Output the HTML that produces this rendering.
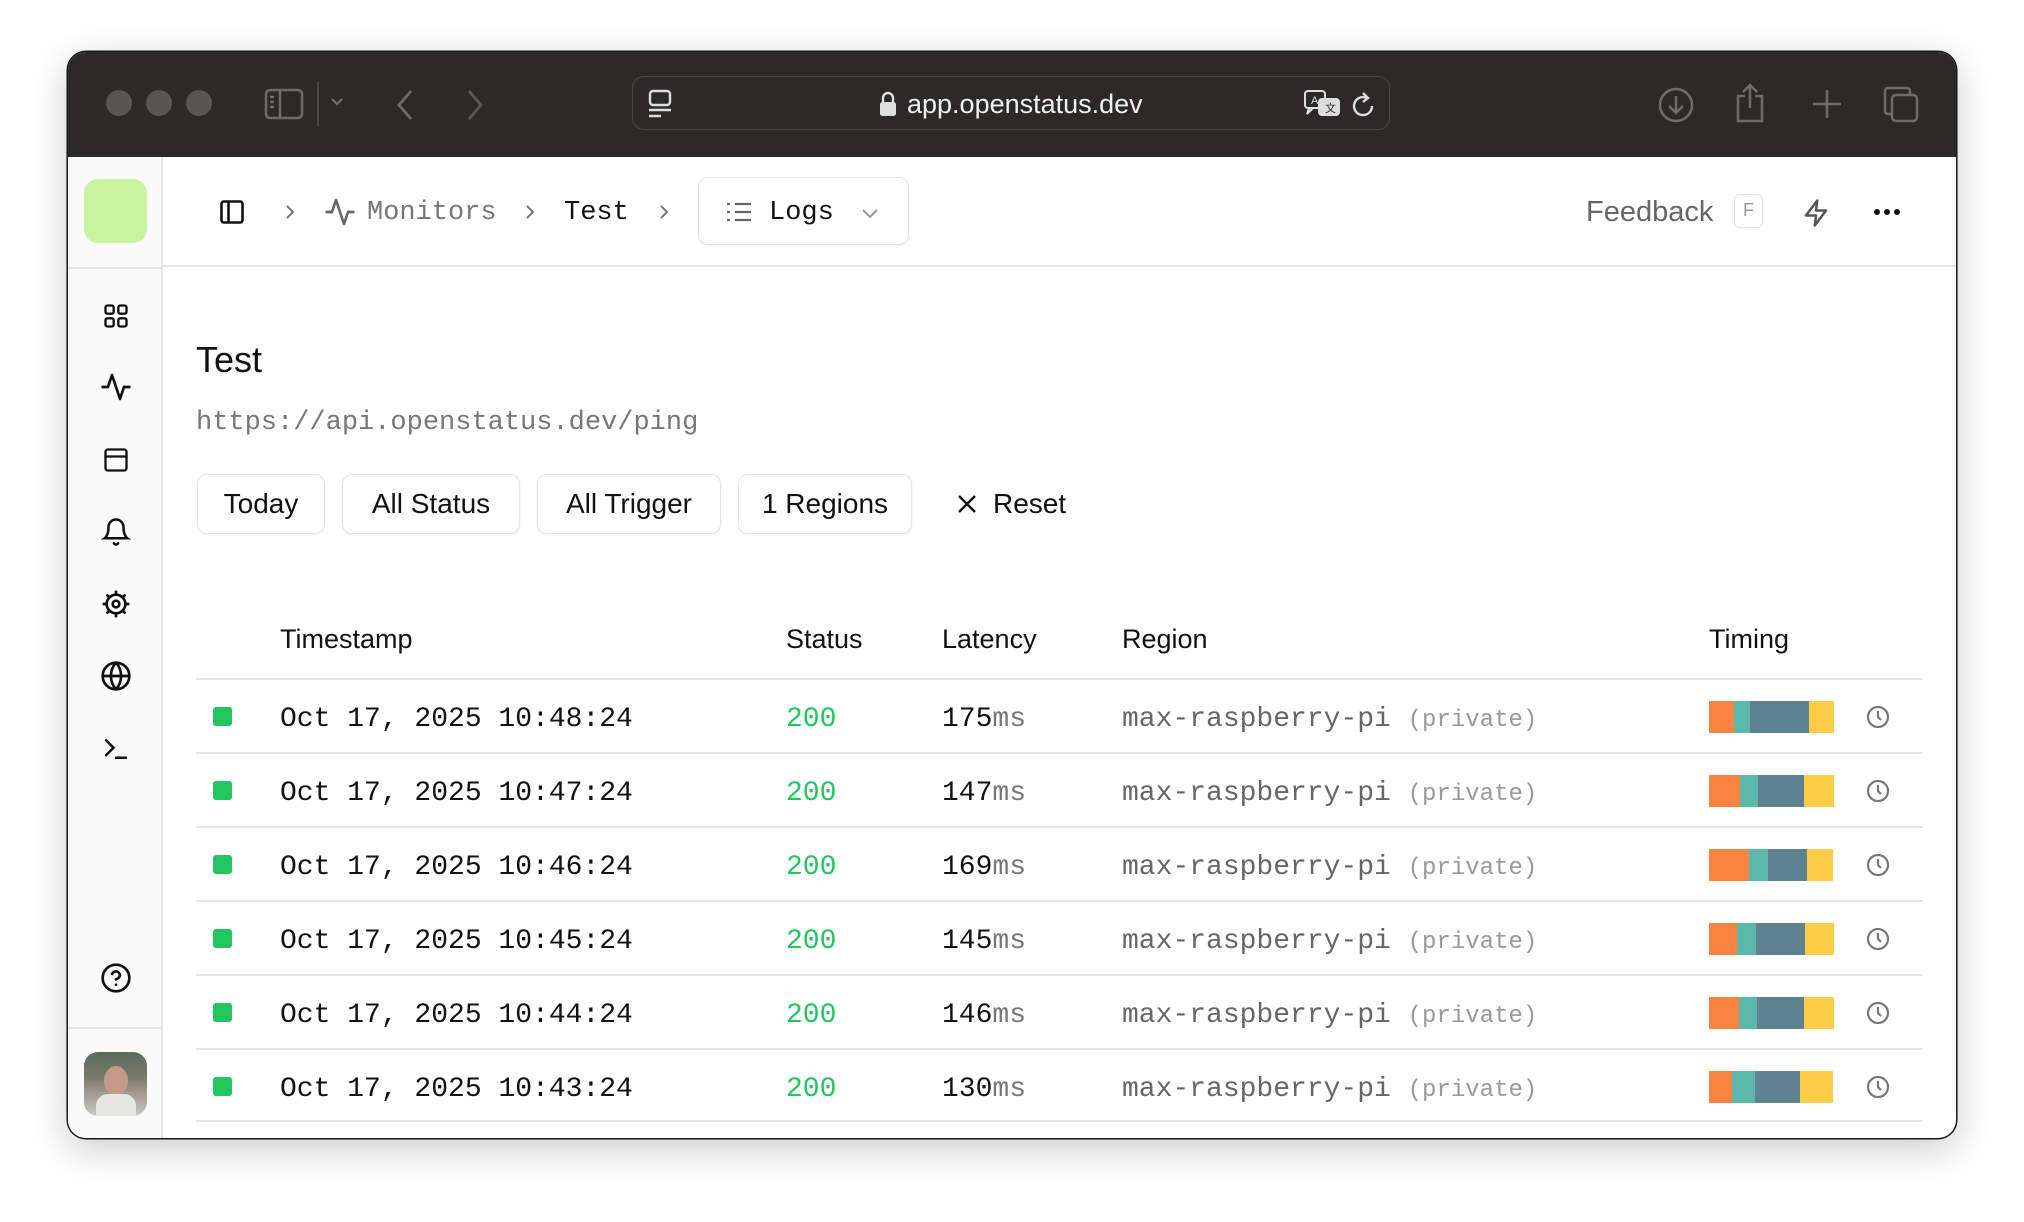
<!DOCTYPE html>
<html><head><meta charset="utf-8"><style>
*{box-sizing:border-box;margin:0;padding:0}
body{width:2024px;height:1222px;background:#fff;position:relative;overflow:hidden;font-family:"Liberation Sans",sans-serif;color:#111}
.win{position:absolute;left:68px;top:52px;width:1888px;height:1086px;border-radius:18px;overflow:hidden;background:#fff;box-shadow:0 10px 40px rgba(0,0,0,.22),0 0 0 1.5px #1a1a1a}
.tb{position:absolute;left:0;top:0;width:100%;height:105px;background:#2c2a28}
.a{position:absolute}
.dot{position:absolute;top:38px;width:26px;height:26px;border-radius:50%;background:#585654}
.url{position:absolute;left:564px;top:24px;width:758px;height:54px;border:1.5px solid #4a4846;border-radius:12px}
.side{position:absolute;left:0;top:105px;width:95px;bottom:0;background:#fafafa;border-right:2px solid #e6e6e6}
.mono{font-family:"Liberation Mono",monospace}
.btn{position:absolute;top:422px;height:60px;border:1.5px solid #e4e4e4;border-radius:10px;font-size:28px;line-height:57px;text-align:center;box-shadow:0 1px 2px rgba(0,0,0,.06)}
.th{position:absolute;top:572px;font-size:27px}
.row{position:absolute;left:128px;width:1727px;height:74px;border-top:2px solid #e5e5e5}
.row .sq{position:absolute;left:17px;top:27px;width:19px;height:19px;border-radius:3px;background:#22c55e}
.row .ts{position:absolute;left:84px;top:24px;font-size:28px}
.row .st{position:absolute;left:590px;top:24px;font-size:28px;color:#22c55e}
.row .lt{position:absolute;left:746px;top:24px;font-size:28px}
.row .lt span{color:#777}
.row .rg{position:absolute;left:926px;top:24px;font-size:28px;color:#666}
.row .rg span{color:#999;font-size:24px}
.bar{position:absolute;left:1513px;top:21px;height:32px;display:flex}
.bar i{display:block;height:32px}
.clk{position:absolute;left:1670px;top:25px}
</style></head><body>
<div class="win">
 <div class="tb">
  <div class="dot" style="left:38px"></div><div class="dot" style="left:78px"></div><div class="dot" style="left:118px"></div>
  <svg class="a" style="left:196px;top:36px" width="40" height="32" viewBox="0 0 40 32" fill="none" stroke="#6e6c6a" stroke-width="2.5"><rect x="2" y="2" width="36" height="28" rx="4"/><line x1="16" y1="2" x2="16" y2="30"/><line x1="6" y1="9" x2="10" y2="9"/><line x1="6" y1="14" x2="10" y2="14"/><line x1="6" y1="19" x2="10" y2="19"/></svg>
  <div class="a" style="left:249px;top:30px;width:1.5px;height:44px;background:#4a4846"></div>
  <svg class="a" style="left:262px;top:45px" width="14" height="10" viewBox="0 0 14 10" fill="none" stroke="#6e6c6a" stroke-width="2.2"><path d="M2 2l5 5 5-5"/></svg>
  <svg class="a" style="left:328px;top:37px" width="18" height="32" viewBox="0 0 18 32" fill="none" stroke="#6e6c6a" stroke-width="2.8"><path d="M15 2L3 16l12 14"/></svg>
  <svg class="a" style="left:398px;top:37px" width="18" height="32" viewBox="0 0 18 32" fill="none" stroke="#5a5856" stroke-width="2.8"><path d="M3 2l12 14L3 30"/></svg>
  <div class="url">
   <svg class="a" style="left:14px;top:12px" width="26" height="30" viewBox="0 0 26 30" fill="none" stroke="#ddd" stroke-width="2.4"><rect x="3" y="2" width="20" height="14" rx="3"/><line x1="2" y1="21" x2="24" y2="21"/><line x1="2" y1="27" x2="14" y2="27"/></svg>
   <svg class="a" style="left:245px;top:13px" width="20" height="28" viewBox="0 0 20 28"><path d="M5 12V8a5 5 0 0 1 10 0v4" fill="none" stroke="#ddd" stroke-width="2.4"/><rect x="2" y="12" width="16" height="14" rx="2.5" fill="#ddd"/></svg>
   <div class="a" style="left:274px;top:12px;font-size:27px;color:#f2f2f2">app.openstatus.dev</div>
   <svg class="a" style="left:670px;top:12px" width="40" height="32" viewBox="0 0 40 32" fill="none" stroke="#ddd" stroke-width="2"><rect x="2" y="2" width="20" height="17" rx="3"/><path d="M6 19l-2 6 6-6"/><rect x="16" y="10" width="20" height="16" rx="3" fill="#ddd"/><text x="8" y="15" font-size="11" fill="#ddd" stroke="none" font-family="Liberation Sans">A</text><text x="22" y="23" font-size="11" fill="#2c2a28" stroke="none" font-family="Liberation Sans">文</text></svg>
   <svg class="a" style="left:717px;top:13px" width="28" height="30" viewBox="0 0 28 30" fill="none" stroke="#ddd" stroke-width="2.4"><path d="M22 16a9 9 0 1 1-5-8"/><path d="M13 3l5 5-5 4"/></svg>
  </div>
  <svg class="a" style="left:1589px;top:34px" width="38" height="38" viewBox="0 0 38 38" fill="none" stroke="#6e6c6a" stroke-width="2.5"><circle cx="19" cy="19" r="16"/><path d="M19 10v17M12 20l7 7 7-7"/></svg>
  <svg class="a" style="left:1666px;top:30px" width="32" height="42" viewBox="0 0 32 42" fill="none" stroke="#6e6c6a" stroke-width="2.5"><path d="M11 14H4v25h24V14h-7M16 3v23M9 10l7-7 7 7"/></svg>
  <svg class="a" style="left:1743px;top:36px" width="32" height="32" viewBox="0 0 32 32" fill="none" stroke="#6e6c6a" stroke-width="2.5"><path d="M16 2v28M2 16h28"/></svg>
  <svg class="a" style="left:1814px;top:33px" width="38" height="38" viewBox="0 0 38 38" fill="none" stroke="#6e6c6a" stroke-width="2.5"><rect x="10" y="10" width="25" height="26" rx="4"/><path d="M28 10V6a3 3 0 0 0-3-3H6a3 3 0 0 0-3 3v20a3 3 0 0 0 3 3h4"/></svg>
 </div>

 <div class="side">
  <div class="a" style="left:16px;top:22px;width:63px;height:64px;border-radius:14px;background:#c8f3a0"></div>
  <div class="a" style="left:0;top:110px;width:95px;height:2px;background:#e6e6e6"></div>
  <svg class="a" style="left:34px;top:145px" width="28" height="28" viewBox="0 0 24 24" fill="none" stroke="#111" stroke-width="2"><rect x="3" y="3" width="7" height="7" rx="1.5"/><rect x="14" y="3" width="7" height="7" rx="1.5"/><rect x="3" y="14" width="7" height="7" rx="1.5"/><rect x="14" y="14" width="7" height="7" rx="1.5"/></svg>
  <svg class="a" style="left:32px;top:214px" width="32" height="32" viewBox="0 0 24 24" fill="none" stroke="#111" stroke-width="2" stroke-linecap="round" stroke-linejoin="round"><path d="M22 12h-4l-3 9L9 3l-3 9H2"/></svg>
  <svg class="a" style="left:34px;top:289px" width="28" height="28" viewBox="0 0 24 24" fill="none" stroke="#111" stroke-width="2"><rect x="3" y="3" width="18" height="18" rx="2"/><path d="M3 9h18"/></svg>
  <svg class="a" style="left:33px;top:359px" width="30" height="32" viewBox="0 0 24 24" fill="none" stroke="#111" stroke-width="2" stroke-linecap="round"><path d="M6 8a6 6 0 0 1 12 0c0 7 3 9 3 9H3s3-2 3-9"/><path d="M10.3 21a1.9 1.9 0 0 0 3.4 0"/></svg>
  <svg class="a" style="left:32px;top:431px" width="32" height="32" viewBox="0 0 24 24" fill="none" stroke="#111" stroke-width="2"><circle cx="12" cy="12" r="7"/><circle cx="12" cy="12" r="2.5"/><path d="M12 2v3M12 19v3M2 12h3M19 12h3M4.9 4.9l2.1 2.1M17 17l2.1 2.1M4.9 19.1L7 17M17 7l2.1-2.1"/></svg>
  <svg class="a" style="left:32px;top:503px" width="32" height="32" viewBox="0 0 24 24" fill="none" stroke="#111" stroke-width="2"><circle cx="12" cy="12" r="10"/><path d="M2 12h20M12 2a15 15 0 0 1 0 20M12 2a15 15 0 0 0 0 20"/></svg>
  <svg class="a" style="left:33px;top:577px" width="30" height="30" viewBox="0 0 24 24" fill="none" stroke="#111" stroke-width="2" stroke-linecap="round"><path d="M4 17l6-6-6-6M12 19h8"/></svg>
  <svg class="a" style="left:32px;top:805px" width="32" height="32" viewBox="0 0 24 24" fill="none" stroke="#111" stroke-width="2" stroke-linecap="round"><circle cx="12" cy="12" r="10"/><path d="M9.1 9a3 3 0 0 1 5.8 1c0 2-3 3-3 3M12 17h.01"/></svg>
  <div class="a" style="left:0;top:870px;width:95px;height:2px;background:#e6e6e6"></div>
  <div class="a" style="left:16px;top:895px;width:63px;height:64px;border-radius:14px;overflow:hidden;background:linear-gradient(180deg,#5b6b5c 0%,#7b7a6e 40%,#a39a90 65%,#c8c8c6 100%)"><div class="a" style="left:20px;top:14px;width:24px;height:30px;border-radius:50%;background:#c49a88"></div><div class="a" style="left:12px;top:42px;width:40px;height:24px;border-radius:12px 12px 0 0;background:#e6e6e2"></div></div>
 </div>

 <!-- header -->
 <div class="a" style="left:95px;top:213px;right:0;height:2px;background:#e6e6e6"></div>
 <svg class="a" style="left:150px;top:146px" width="28" height="28" viewBox="0 0 24 24" fill="none" stroke="#111" stroke-width="2.2"><rect x="3" y="3" width="18" height="18" rx="2"/><path d="M9 3v18"/></svg>
 <svg class="a" style="left:215px;top:151px" width="14" height="18" viewBox="0 0 14 18" fill="none" stroke="#777" stroke-width="2"><path d="M4 3l6 6-6 6"/></svg>
 <svg class="a" style="left:256px;top:144px" width="32" height="32" viewBox="0 0 24 24" fill="none" stroke="#666" stroke-width="2" stroke-linecap="round" stroke-linejoin="round"><path d="M22 12h-4l-3 9L9 3l-3 9H2"/></svg>
 <div class="a mono" style="left:299px;top:146px;font-size:27px;color:#777">Monitors</div>
 <svg class="a" style="left:455px;top:151px" width="14" height="18" viewBox="0 0 14 18" fill="none" stroke="#777" stroke-width="2"><path d="M4 3l6 6-6 6"/></svg>
 <div class="a mono" style="left:496px;top:146px;font-size:27px;color:#111">Test</div>
 <svg class="a" style="left:589px;top:151px" width="14" height="18" viewBox="0 0 14 18" fill="none" stroke="#777" stroke-width="2"><path d="M4 3l6 6-6 6"/></svg>
 <div class="a" style="left:630px;top:125px;width:211px;height:68px;border:1.5px solid #e2e2e2;border-radius:10px;box-shadow:0 1px 2px rgba(0,0,0,.05)">
  <svg class="a" style="left:26px;top:23px" width="28" height="22" viewBox="0 0 28 22" fill="none" stroke="#666" stroke-width="2.2"><path d="M2 3h3M2 11h3M2 19h3M10 3h16M10 11h16M10 19h16"/></svg>
  <div class="a mono" style="left:70px;top:20px;font-size:27px">Logs</div>
  <svg class="a" style="left:161px;top:29px" width="20" height="14" viewBox="0 0 20 14" fill="none" stroke="#999" stroke-width="2"><path d="M3 3l7 7 7-7"/></svg>
 </div>
 <div class="a" style="left:1518px;top:144px;font-size:29px;color:#666">Feedback</div>
 <div class="a" style="left:1666px;top:142px;width:29px;height:34px;border:1.5px solid #e2e2e2;border-radius:6px;font-size:18px;color:#999;text-align:center;line-height:31px">F</div>
 <svg class="a" style="left:1733px;top:145px" width="30" height="32" viewBox="0 0 24 24" fill="none" stroke="#555" stroke-width="2" stroke-linejoin="round"><path d="M13 2L4 14h8l-1 8 9-12h-8z"/></svg>
 <svg class="a" style="left:1805px;top:153px" width="28" height="14" viewBox="0 0 28 14" fill="#111"><circle cx="4" cy="7" r="3"/><circle cx="14" cy="7" r="3"/><circle cx="24" cy="7" r="3"/></svg>

 <!-- content -->
 <div class="a" style="left:128px;top:287px;font-size:36px;color:#111">Test</div>
 <div class="a mono" style="left:128px;top:356px;font-size:27px;color:#777">https://api.openstatus.dev/ping</div>
 <div class="btn" style="left:129px;width:128px">Today</div>
 <div class="btn" style="left:274px;width:178px">All Status</div>
 <div class="btn" style="left:469px;width:184px">All Trigger</div>
 <div class="btn" style="left:670px;width:174px">1 Regions</div>
 <svg class="a" style="left:888px;top:441px" width="22" height="22" viewBox="0 0 22 22" fill="none" stroke="#111" stroke-width="2.4"><path d="M3 3l16 16M19 3L3 19"/></svg>
 <div class="a" style="left:925px;top:436px;font-size:28px">Reset</div>

 <div class="th" style="left:212px">Timestamp</div>
 <div class="th" style="left:718px">Status</div>
 <div class="th" style="left:874px">Latency</div>
 <div class="th" style="left:1054px">Region</div>
 <div class="th" style="left:1641px">Timing</div>

 <div class="row" style="top:626px"><div class="sq"></div><div class="ts mono">Oct 17, 2025 10:48:24</div><div class="st mono">200</div><div class="lt mono">175<span>ms</span></div><div class="rg mono">max-raspberry-pi <span>(private)</span></div><div class="bar"><i style="width:25px;background:#f98440"></i><i style="width:16px;background:#5cb8aa"></i><i style="width:59px;background:#5e8290"></i><i style="width:25px;background:#fdcd47"></i></div><svg class="clk" width="24" height="24" viewBox="0 0 24 24" fill="none" stroke="#777" stroke-width="2.2"><circle cx="12" cy="12" r="10"/><path d="M12 6v6l3 3"/></svg></div>
 <div class="row" style="top:700px"><div class="sq"></div><div class="ts mono">Oct 17, 2025 10:47:24</div><div class="st mono">200</div><div class="lt mono">147<span>ms</span></div><div class="rg mono">max-raspberry-pi <span>(private)</span></div><div class="bar"><i style="width:31px;background:#f98440"></i><i style="width:18px;background:#5cb8aa"></i><i style="width:46px;background:#5e8290"></i><i style="width:30px;background:#fdcd47"></i></div><svg class="clk" width="24" height="24" viewBox="0 0 24 24" fill="none" stroke="#777" stroke-width="2.2"><circle cx="12" cy="12" r="10"/><path d="M12 6v6l3 3"/></svg></div>
 <div class="row" style="top:774px"><div class="sq"></div><div class="ts mono">Oct 17, 2025 10:46:24</div><div class="st mono">200</div><div class="lt mono">169<span>ms</span></div><div class="rg mono">max-raspberry-pi <span>(private)</span></div><div class="bar"><i style="width:40px;background:#f98440"></i><i style="width:19px;background:#5cb8aa"></i><i style="width:39px;background:#5e8290"></i><i style="width:26px;background:#fdcd47"></i></div><svg class="clk" width="24" height="24" viewBox="0 0 24 24" fill="none" stroke="#777" stroke-width="2.2"><circle cx="12" cy="12" r="10"/><path d="M12 6v6l3 3"/></svg></div>
 <div class="row" style="top:848px"><div class="sq"></div><div class="ts mono">Oct 17, 2025 10:45:24</div><div class="st mono">200</div><div class="lt mono">145<span>ms</span></div><div class="rg mono">max-raspberry-pi <span>(private)</span></div><div class="bar"><i style="width:28px;background:#f98440"></i><i style="width:19px;background:#5cb8aa"></i><i style="width:49px;background:#5e8290"></i><i style="width:29px;background:#fdcd47"></i></div><svg class="clk" width="24" height="24" viewBox="0 0 24 24" fill="none" stroke="#777" stroke-width="2.2"><circle cx="12" cy="12" r="10"/><path d="M12 6v6l3 3"/></svg></div>
 <div class="row" style="top:922px"><div class="sq"></div><div class="ts mono">Oct 17, 2025 10:44:24</div><div class="st mono">200</div><div class="lt mono">146<span>ms</span></div><div class="rg mono">max-raspberry-pi <span>(private)</span></div><div class="bar"><i style="width:30px;background:#f98440"></i><i style="width:18px;background:#5cb8aa"></i><i style="width:47px;background:#5e8290"></i><i style="width:30px;background:#fdcd47"></i></div><svg class="clk" width="24" height="24" viewBox="0 0 24 24" fill="none" stroke="#777" stroke-width="2.2"><circle cx="12" cy="12" r="10"/><path d="M12 6v6l3 3"/></svg></div>
 <div class="row" style="top:996px;border-bottom:2px solid #e5e5e5"><div class="sq"></div><div class="ts mono">Oct 17, 2025 10:43:24</div><div class="st mono">200</div><div class="lt mono">130<span>ms</span></div><div class="rg mono">max-raspberry-pi <span>(private)</span></div><div class="bar"><i style="width:23px;background:#f98440"></i><i style="width:23px;background:#5cb8aa"></i><i style="width:45px;background:#5e8290"></i><i style="width:33px;background:#fdcd47"></i></div><svg class="clk" width="24" height="24" viewBox="0 0 24 24" fill="none" stroke="#777" stroke-width="2.2"><circle cx="12" cy="12" r="10"/><path d="M12 6v6l3 3"/></svg></div>
</div>
</body></html>
